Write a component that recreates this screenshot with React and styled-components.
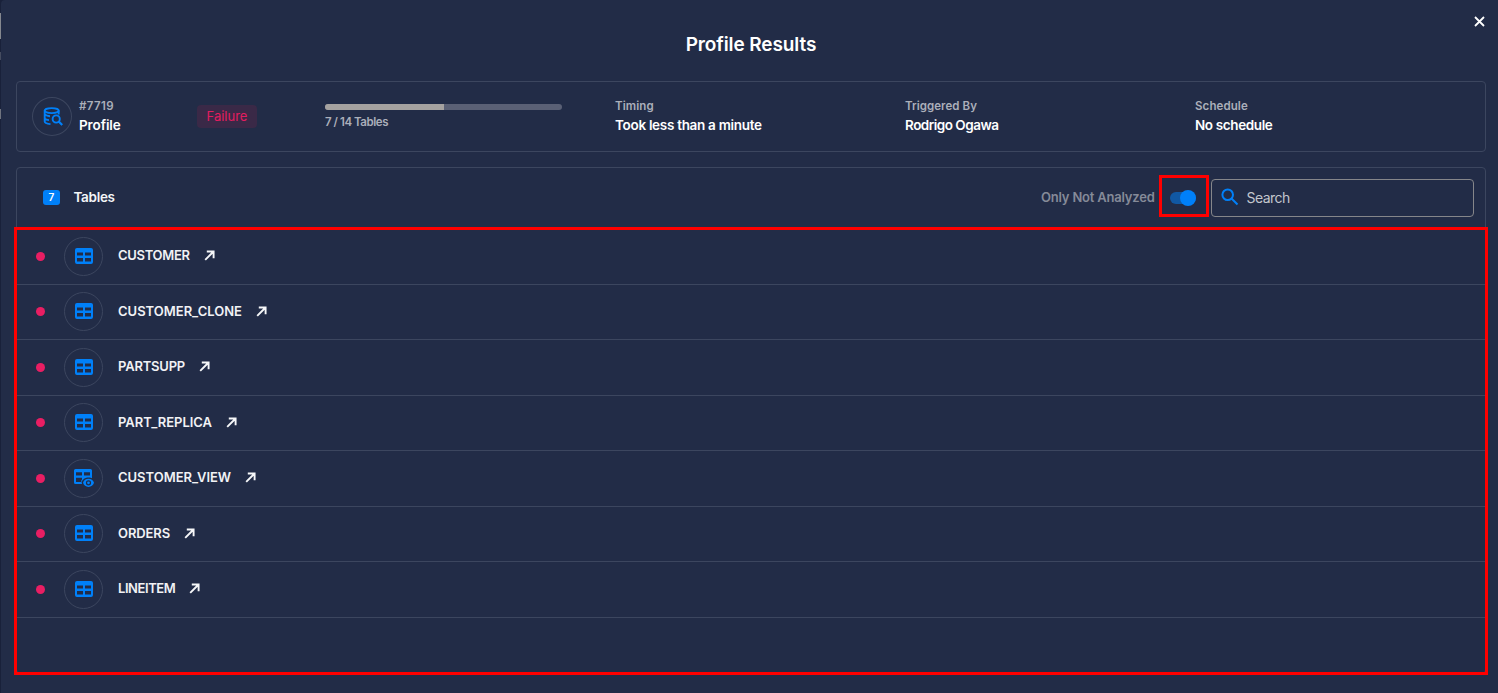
import React from "react";
import styled, { createGlobalStyle } from "styled-components";

const GlobalStyle = createGlobalStyle`
  *, *::before, *::after { box-sizing: border-box; }
  body {
    margin: 0;
    background: #19213a;
    font-family: Inter, "Liberation Sans", sans-serif;
    overflow: hidden;
  }
`;

const LINE = "#3c465f";
const BLUE = "#0080f9";

const Page = styled.div`
  position: relative;
  height: 693px;
  padding-left: 1px;
`;

const PageEdge = styled.div`
  position: absolute;
  left: 0;
  top: ${(p) => p.$top}px;
  width: 1px;
  height: ${(p) => p.$height}px;
  background: ${(p) => p.$color};
`;

const Modal = styled.main`
  position: relative;
  height: 693px;
  padding: 0 12px 0 15px;
  border-top-left-radius: 4px;
  background: #222c47;
  display: flex;
  flex-direction: column;
`;

const ModalHeader = styled.header`
  height: 81px;
  flex: none;
  padding-top: 33px;
  text-align: center;
`;

const Title = styled.h1`
  margin: 0;
  font-size: 19px;
  line-height: 23px;
  font-weight: 600;
  letter-spacing: ${(p) => p.$track}px;
  color: #fff;
`;

const CloseButton = styled.button`
  position: absolute;
  top: 16px;
  right: 13px;
  width: 11px;
  height: 11px;
  padding: 0;
  border: 0;
  background: none;
  display: flex;
`;

const Summary = styled.section`
  height: 71px;
  flex: none;
  border: 1px solid ${LINE};
  border-radius: 4px;
  display: grid;
  grid-template-columns: 308px repeat(4, 290px);
  padding-top: 15px;
  overflow: hidden;
`;

const Identity = styled.div`
  display: flex;
  padding-left: 15px;
`;

const IconCircle = styled.div`
  width: ${(p) => p.$size || 39}px;
  height: 39px;
  flex: none;
  border: 1px solid ${LINE};
  border-radius: 50%;
  display: flex;
  align-items: center;
  justify-content: center;
  padding: 0 0 1px ${(p) => p.$nudge || 0}px;
  svg { display: block; flex: none; }
`;

const IdentityText = styled.div`
  width: 125px;
  padding: 1px 0 0 7px;
`;

const Column = styled.div`
  padding-top: 1px;
`;

const Label = styled.div`
  font-size: 11.5px;
  line-height: 16px;
  font-weight: 600;
  letter-spacing: ${(p) => p.$track || 0}px;
  color: #abafba;
  white-space: pre;
`;

const Value = styled.div`
  margin-top: 1px;
  font-size: 13.5px;
  line-height: 20px;
  font-weight: 600;
  letter-spacing: ${(p) => p.$track || 0}px;
  color: #fff;
  white-space: pre;
`;

const StatusBadge = styled.span`
  width: 60px;
  height: 23px;
  margin-top: 8px;
  border-radius: 4px;
  background: #3a2947;
  color: #e31c5f;
  font-size: 13px;
  line-height: 23px;
  text-align: center;
  letter-spacing: ${(p) => p.$track}px;
`;

const ProgressTrack = styled.div`
  width: 237px;
  height: 6px;
  margin: 7px 0 4px;
  border-radius: 3px;
  background: #5a6075;
  overflow: hidden;
`;

const ProgressFill = styled.div`
  height: 100%;
  background: #a5a2a0;
`;

const TablesPanel = styled.section`
  height: 507px;
  flex: none;
  margin-top: 15px;
  border: 1px solid ${LINE};
  border-radius: 4px;
`;

const PanelHeader = styled.div`
  height: 59px;
  margin-bottom: 2px;
  display: flex;
  align-items: center;
  padding: 0 11px 0 26px;
`;

const CountBadge = styled.span`
  width: 17px;
  height: 15px;
  border-radius: 3px;
  background: ${BLUE};
  color: #fff;
  font-size: 10px;
  line-height: 15px;
  font-weight: 600;
  text-align: center;
`;

const PanelTitle = styled.h2`
  margin: -1px auto 0 13.5px;
  font-size: 13.5px;
  line-height: 18px;
  font-weight: 600;
  letter-spacing: ${(p) => p.$track}px;
  color: #f4f5f7;
`;

const ToggleLabel = styled.span`
  width: 118px;
  margin-top: -2px;
  font-size: 13px;
  line-height: 18px;
  font-weight: 600;
  letter-spacing: ${(p) => p.$track}px;
  color: #858a98;
  white-space: nowrap;
`;

const ToggleFrame = styled.div`
  width: 50px;
  height: 42px;
  margin: -3px 2px 0 0;
  border: 3px solid #f00;
  display: flex;
  align-items: center;
  padding: 3px 0 0 8px;
`;

const Switch = styled.div`
  width: 26px;
  height: 12px;
  border-radius: 6px;
  background: #1158a3;
  display: flex;
  align-items: center;
  justify-content: flex-end;
`;

const SwitchThumb = styled.span`
  width: 16px;
  height: 16px;
  flex: none;
  border-radius: 50%;
  background: ${BLUE};
`;

const SearchBox = styled.div`
  width: 263px;
  height: 38px;
  border: 1px solid #85868a;
  border-radius: 4px;
  display: flex;
  align-items: center;
  padding: 0 0 1px 9px;
`;

const SearchText = styled.span`
  margin: 1px 0 0 7.5px;
  font-size: 14px;
  letter-spacing: ${(p) => p.$track}px;
  color: #c3c6cd;
`;

const Row = styled.div`
  height: 55.5px;
  border-bottom: 1px solid ${LINE};
  display: flex;
  align-items: center;
  padding-left: 19px;
`;

const StatusDot = styled.span`
  width: 9px;
  height: 9px;
  margin-right: 19px;
  border-radius: 50%;
  background: #e91e63;
`;

const TableName = styled.span`
  width: ${(p) => p.$width}px;
  margin: -2px 14px 0 15px;
  font-size: 13px;
  font-weight: 600;
  letter-spacing: ${(p) => p.$track}px;
  color: #f1f2f5;
  white-space: nowrap;
`;

const ListOutline = styled.div`
  position: absolute;
  left: 12.6px;
  top: 227px;
  width: 1474px;
  height: 447.6px;
  border: 3px solid #f00;
  pointer-events: none;
`;

const CloseIcon = () => (
  <svg width="11" height="11" viewBox="0 0 11 11" stroke="#fff" strokeWidth="1.8">
    <path d="M1 1l9 9M10 1l-9 9" />
  </svg>
);

const DatabaseSearchIcon = () => (
  <svg width="20" height="19" viewBox="0 0 20 19" fill="none" stroke={BLUE} strokeWidth="1.9">
    <ellipse cx="8.700" cy="3.600" rx="7" ry="2.500" />
    <path d="M1.700 3.600v10.900c0 1.300 2.300 2.300 5.800 2.600M15.700 3.600v4M1.700 7.300c.8 1.100 2.600 1.700 5.300 1.900M1.700 11.500c.8 1 2.300 1.500 4.300 1.600" />
    <circle cx="13.200" cy="12" r="3.600" />
    <path d="M15.700 14.500l3.500 3.500" strokeWidth="2.200" />
  </svg>
);

const TableIcon = () => (
  <svg width="18" height="16" viewBox="0 0 18 16">
    <path
      fill={BLUE}
      fillRule="evenodd"
      d="M2 0h14a2 2 0 0 1 2 2v12a2 2 0 0 1-2 2H2a2 2 0 0 1-2-2V2a2 2 0 0 1 2-2zM2 4.600v3h6v-3zM10 4.600v3h6v-3zM2 10v3.600h6V10zM10 10v3.600h6V10z"
    />
  </svg>
);

const ViewIcon = () => (
  <svg width="20" height="18" viewBox="0 0 20 18">
    <path
      fill={BLUE}
      fillRule="evenodd"
      d="M1.500 0h15A1.500 1.500 0 0 1 18 1.500V9.300C16.500 8.300 12.500 8.200 10 9.800L7.500 12.500 8 15H1.500A1.500 1.500 0 0 1 0 13.500V1.500A1.500 1.500 0 0 1 1.500 0zM2 3.300v3.200h6V3.300zM10 3.300v3.200h6V3.300zM2 8.700v4.400h5V12L8 10.600V8.700z"
    />
    <path
      fill={BLUE}
      fillRule="evenodd"
      d="M14.500 9.700c2.600 0 4.700 1.500 5.500 4.100-.8 2.600-2.900 4.100-5.500 4.100S9.800 16.400 9 13.800c.8-2.600 2.900-4.100 5.500-4.100zm0 1.500a2.600 2.600 0 1 0 0 5.200 2.600 2.600 0 0 0 0-5.200zm0 1.200a1.400 1.400 0 1 1 0 2.800 1.400 1.400 0 0 1 0-2.800z"
    />
  </svg>
);

const ArrowGlyph = styled.svg`
  margin-top: -1px;
`;

const ArrowIcon = () => (
  <ArrowGlyph width="11" height="11" viewBox="0 0 11 11" fill="none" stroke="#f6f7f9" strokeWidth="1.9">
    <path d="M2.800 1.500H9.600v6.800M9.600 1.500L1.200 9.900" />
  </ArrowGlyph>
);

const SearchIcon = () => (
  <svg width="18" height="18" viewBox="0 0 18 18" fill="none" stroke={BLUE} strokeWidth="2">
    <circle cx="6.700" cy="6.700" r="5.300" />
    <path d="M10.500 10.500l6 6" />
  </svg>
);

const tables = [
  { name: "CUSTOMER", width: 72, track: -0.3 },
  { name: "CUSTOMER_CLONE", width: 124, track: 0 },
  { name: "PARTSUPP", width: 67, track: -0.2 },
  { name: "PART_REPLICA", width: 94, track: 0 },
  { name: "CUSTOMER_VIEW", width: 113, track: -0.02, view: true },
  { name: "ORDERS", width: 52, track: -0.1 },
  { name: "LINEITEM", width: 57, track: -0.42 },
];

const details = [
  { label: "Timing", value: "Took less than a minute", labelTrack: 0.1, track: -0.3 },
  { label: "Triggered By", value: "Rodrigo Ogawa", labelTrack: 0.05, track: -0.5 },
  { label: "Schedule", value: "No schedule", labelTrack: 0.1, track: -0.38 },
];

export default function App() {
  return (
    <Page>
      <GlobalStyle />
      <PageEdge $top={13} $height={26} $color="#85888f" />
      <PageEdge $top={52} $height={8} $color="#454c60" />
      <PageEdge $top={109} $height={10} $color="#70747f" />
      <Modal>
        <ModalHeader>
          <Title $track={-0.1}>Profile Results</Title>
        </ModalHeader>
        <CloseButton aria-label="Close"><CloseIcon /></CloseButton>
        <Summary>
          <Identity>
            <IconCircle $size={40} $nudge={2}><DatabaseSearchIcon /></IconCircle>
            <IdentityText>
              <Label $track={0.4}>#7719</Label>
              <Value $track={-0.1}>Profile</Value>
            </IdentityText>
            <StatusBadge $track={0}>Failure</StatusBadge>
          </Identity>
          <div>
            <ProgressTrack><ProgressFill style={{ width: `${(7 / 14) * 100}%` }} /></ProgressTrack>
            <Label $track={-0.45}>7 / 14 Tables</Label>
          </div>
          {details.map((d) => (
            <Column key={d.label}>
              <Label $track={d.labelTrack}>{d.label}</Label>
              <Value $track={d.track}>{d.value}</Value>
            </Column>
          ))}
        </Summary>
        <TablesPanel>
          <PanelHeader>
            <CountBadge>7</CountBadge>
            <PanelTitle $track={-0.3}>Tables</PanelTitle>
            <ToggleLabel $track={-0.2}>Only Not Analyzed</ToggleLabel>
            <ToggleFrame>
              <Switch role="switch" aria-checked="true"><SwitchThumb /></Switch>
            </ToggleFrame>
            <SearchBox>
              <SearchIcon />
              <SearchText $track={-0.55}>Search</SearchText>
            </SearchBox>
          </PanelHeader>
          {tables.map((t) => (
            <Row key={t.name}>
              <StatusDot />
              <IconCircle $nudge={t.view ? 1 : 0}>{t.view ? <ViewIcon /> : <TableIcon />}</IconCircle>
              <TableName $width={t.width} $track={t.track}>{t.name}</TableName>
              <ArrowIcon />
            </Row>
          ))}
        </TablesPanel>
        <ListOutline />
      </Modal>
    </Page>
  );
}
